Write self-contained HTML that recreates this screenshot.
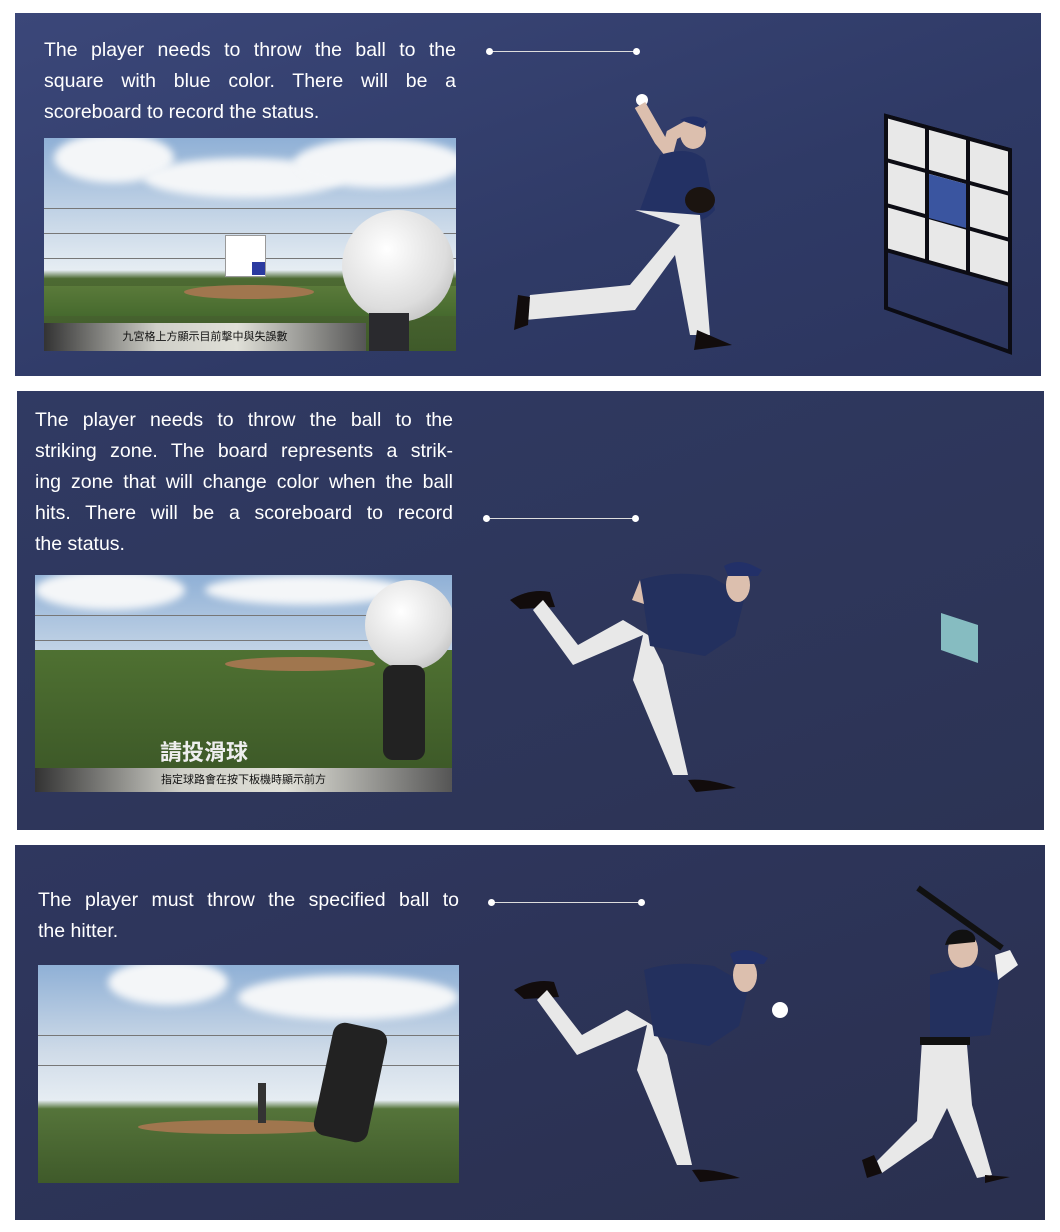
<!DOCTYPE html>
<html><head><meta charset="utf-8"><style>
body{margin:0;width:1060px;height:1232px;background:#fff;position:relative;overflow:hidden;font-family:"Liberation Sans","Noto Sans CJK TC",sans-serif}
.p{position:absolute}
.t{position:absolute;color:#fff;font-size:19.5px;line-height:31px}
.t div{text-align:justify;text-align-last:justify;white-space:nowrap}
.t div.l{text-align-last:left}
.img{position:absolute;overflow:hidden;background:linear-gradient(#8fb0d6 0%,#c9d8e8 40%,#e6edf3 62%,#4d6a32 66%,#3f5a2a 100%)}
.cl{position:absolute;background:#f4f6f8;border-radius:50%;filter:blur(4px)}
.net{position:absolute;left:0;right:0;border-top:1px solid #777}
.cap{position:absolute;left:0;right:0;bottom:0;height:28px;background:linear-gradient(90deg,#333,#cfcfc8 35%,#e0e0d8 60%,#555);text-align:center;font-size:11px;line-height:28px;color:#111}
.ball{position:absolute;border-radius:50%;background:radial-gradient(circle at 40% 35%,#fff,#ddd 60%,#aaa)}
.ln{position:absolute;height:1px;background:#ddd}
.ln:before,.ln:after{content:"";position:absolute;top:-3px;width:7px;height:7px;border-radius:50%;background:#fff}
.ln:before{left:-3px}.ln:after{right:-3px}
</style></head><body>
<div class="p" style="left:15px;top:13px;width:1026px;height:363px;background:linear-gradient(160deg,#3b4779,#2f3a66 60%,#2c355e)"></div>
<div class="p" style="left:17px;top:391px;width:1027px;height:439px;background:linear-gradient(160deg,#303a63,#2c3354)"></div>
<div class="p" style="left:15px;top:845px;width:1030px;height:375px;background:linear-gradient(160deg,#2f375f,#2a304f)"></div>

<div class="t" style="left:44px;top:35px;width:412px"><div>The player needs to throw the ball to the</div><div>square with blue color. There will be a</div><div class="l">scoreboard to record the status.</div></div>
<div class="t" style="left:35px;top:405px;width:418px"><div>The player needs to throw the ball to the</div><div>striking zone. The board represents a strik-</div><div>ing zone that will change color when the ball</div><div>hits. There will be a scoreboard to record</div><div class="l">the status.</div></div>
<div class="t" style="left:38px;top:885px;width:421px"><div>The player must throw the specified ball to</div><div class="l">the hitter.</div></div>

<div class="ln" style="left:489px;top:51px;width:148px"></div>
<div class="ln" style="left:486px;top:518px;width:150px"></div>
<div class="ln" style="left:491px;top:902px;width:151px"></div>

<!-- image 1 -->
<div class="img" style="left:44px;top:138px;width:412px;height:213px">
<div class="cl" style="left:10px;top:-5px;width:120px;height:50px"></div>
<div class="cl" style="left:100px;top:20px;width:200px;height:40px"></div>
<div class="cl" style="left:250px;top:0;width:170px;height:50px"></div>
<div class="net" style="top:70px"></div><div class="net" style="top:95px"></div><div class="net" style="top:120px"></div>
<div class="p" style="left:181px;top:97px;width:39px;height:40px;background:#fff;border:1px solid #999"></div>
<div class="p" style="left:208px;top:124px;width:13px;height:13px;background:#2b3aa0"></div>
<div class="p" style="left:0;top:148px;width:412px;height:30px;background:linear-gradient(#5a7a3a,#466a2e)"></div>
<div class="p" style="left:140px;top:147px;width:130px;height:14px;background:#a0764e;border-radius:50%"></div>
<div class="ball" style="left:298px;top:72px;width:112px;height:112px"></div>
<div class="p" style="left:325px;top:175px;width:40px;height:40px;background:#2a2a2e"></div>
<div class="cap" style="right:90px">九宮格上方顯示目前擊中與失誤數</div>
</div>
<!-- image 2 -->
<div class="img" style="left:35px;top:575px;width:417px;height:217px">
<div class="cl" style="left:0;top:-5px;width:150px;height:40px"></div>
<div class="cl" style="left:170px;top:0;width:200px;height:30px"></div>
<div class="net" style="top:40px"></div><div class="net" style="top:65px"></div>
<div class="p" style="left:0;top:75px;width:417px;height:142px;background:linear-gradient(#4f7132,#3a5526)"></div>
<div class="p" style="left:190px;top:82px;width:150px;height:14px;background:#a0764e;border-radius:50%"></div>
<div class="ball" style="left:330px;top:5px;width:90px;height:90px"></div>
<div class="p" style="left:348px;top:90px;width:42px;height:95px;background:#222;border-radius:10px"></div>
<div class="p" style="left:125px;top:160px;font-size:22px;color:#eee;font-weight:bold">請投滑球</div>
<div class="cap" style="height:24px;line-height:24px">指定球路會在按下板機時顯示前方</div>
</div>
<!-- image 3 -->
<div class="img" style="left:38px;top:965px;width:421px;height:218px;background:linear-gradient(#8fb0d6 0%,#cfdbe8 40%,#e6edf3 62%,#55743a 66%,#3f5a2a 100%)">
<div class="cl" style="left:70px;top:-5px;width:120px;height:45px"></div>
<div class="cl" style="left:200px;top:10px;width:220px;height:45px"></div>
<div class="net" style="top:70px"></div><div class="net" style="top:100px"></div>
<div class="p" style="left:100px;top:155px;width:200px;height:14px;background:#a0764e;border-radius:50%"></div>
<div class="p" style="left:220px;top:118px;width:8px;height:40px;background:#333"></div>
<div class="p" style="left:285px;top:60px;width:55px;height:115px;background:#222;border-radius:12px;transform:rotate(12deg)"></div>
</div>

<svg class="p" style="left:0;top:0" width="1060" height="1232">
<g stroke="#0c0c14" stroke-width="4" fill="#e8e8e8">
<polygon points="886,116 1010,150 1010,352 886,308" fill="none"/>
<polygon points="886,116 1010,150 1010,285 886,250"/>
<line x1="927" y1="127" x2="927" y2="262"/><line x1="968" y1="139" x2="968" y2="273"/>
<line x1="886" y1="160" x2="1010" y2="194"/><line x1="886" y1="205" x2="1010" y2="240"/>
</g>
<polygon points="929,174 966,184 966,228 929,218" fill="#3a55a0"/>
<circle cx="642" cy="100" r="6" fill="#fff"/>
<path d="M640 105 L660 140 L668 150 L672 135 L690 125" stroke="#dcbfae" stroke-width="12" fill="none"/>
<ellipse cx="693" cy="133" rx="13" ry="16" fill="#dcbfae"/>
<path d="M680 120 q15-8 28 2 l-5 6z" fill="#223068"/>
<path d="M660 155 q30-10 45 5 l10 50 q-20 25 -75 0z" fill="#233164"/>
<ellipse cx="700" cy="200" rx="15" ry="13" fill="#1b1410"/>
<path d="M635 210 l45 15 l-50 60 l-100 10 l-5 25 l110 -10 l40-55 l15 80 l20 0 l-10-120z" fill="#e8e8e8"/>
<path d="M518 295 l12 2 l-2 28 l-14 5z" fill="#120c0c"/>
<path d="M697 330 l35 15 l-38 5z" fill="#120c0c"/>
<path d="M510 600 q20-12 40-8 l5 15 l-35 2z" fill="#120c0c"/>
<path d="M533 610 l40 55 l70-30 l-10 45 l40 95 l15 0 l-25-110 l-15-30 l-25 -15 l-45 25 l-35-45z" fill="#e8e8e8"/>
<path d="M640 580 q30-10 70 -4 l35 20 l-10 40 l-30 20 l-55 -10 z" fill="#23305e"/>
<ellipse cx="738" cy="585" rx="12" ry="17" fill="#dcbfae"/>
<path d="M724 566 q14-8 30 0 l8 4 l-4 6 l-30 0z" fill="#223068"/>
<path d="M640 580 l-8 20 l12 4z" fill="#dcbfae"/>
<path d="M688 780 q20-2 48 8 l-40 4z" fill="#120c0c"/>
<polygon points="941,613 978,625 978,663 941,650" fill="#86bcc1"/>
<path d="M514 990 q20-12 40-8 l5 15 l-35 2z" fill="#120c0c"/>
<path d="M537 1000 l40 55 l70-30 l-10 45 l40 95 l15 0 l-25-110 l-15-30 l-25 -15 l-45 25 l-35-45z" fill="#e8e8e8"/>
<path d="M644 970 q30-10 70 -4 l35 20 l-10 40 l-30 20 l-55 -10 z" fill="#23305e"/>
<ellipse cx="745" cy="975" rx="12" ry="17" fill="#dcbfae"/>
<path d="M730 954 q14-8 30 0 l8 4 l-4 6 l-30 0z" fill="#223068"/>
<path d="M692 1170 q20-2 48 8 l-40 4z" fill="#120c0c"/>
<circle cx="780" cy="1010" r="8" fill="#fff"/>
<line x1="918" y1="888" x2="1002" y2="948" stroke="#111" stroke-width="6"/>
<ellipse cx="963" cy="950" rx="15" ry="18" fill="#dcbfae"/>
<path d="M945 945 q5-18 22-15 q10 4 8 12z" fill="#111"/>
<path d="M930 975 l45 -10 l25 10 l-10 60 l-60 5z" fill="#23305e"/>
<path d="M995 955 l15 -5 l8 15 l-20 15z" fill="#eee"/>
<path d="M922 1040 l45 5 l5 60 l20 70 l-15 3 l-30-70 l-15 30 l-50 35 l-5-12 l40-40z" fill="#e8e8e8"/>
<rect x="920" y="1037" width="50" height="8" fill="#111"/>
<path d="M862 1160 l12 -5 l8 18 l-15 5z" fill="#120c0c"/>
<path d="M985 1175 l25 2 l-25 6z" fill="#120c0c"/>
</svg>
</body></html>
